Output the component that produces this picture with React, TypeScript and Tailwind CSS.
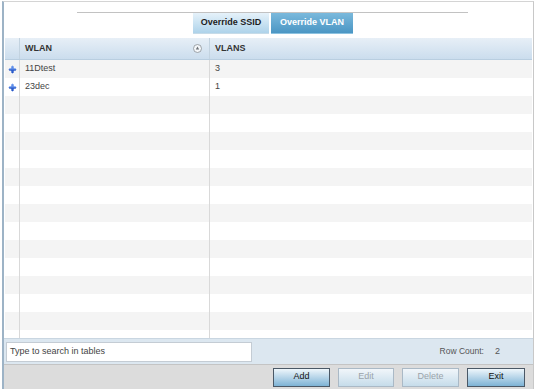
import React from "react";

function PlusIcon() {
  return (
    <svg width="9" height="9" viewBox="0 0 9 9">
      <defs>
        <linearGradient id="pg" x1="0" y1="0" x2="0" y2="1">
          <stop offset="0" stopColor="#6f9cf0" />
          <stop offset="1" stopColor="#1d4fc4" />
        </linearGradient>
      </defs>
      <path d="M4.5 0 L5.6 3.4 L9 4.5 L5.6 5.6 L4.5 9 L3.4 5.6 L0 4.5 L3.4 3.4 Z" fill="url(#pg)" />
      <rect x="3.4" y="1" width="2.2" height="7" fill="url(#pg)" />
      <rect x="1" y="3.4" width="7" height="2.2" fill="url(#pg)" />
    </svg>
  );
}

function SortIcon() {
  return (
    <svg width="9" height="9" viewBox="0 0 9 9">
      <circle cx="4.5" cy="4.5" r="4" fill="#f4f7fa" stroke="#8a8f95" strokeWidth="0.8" />
      <path d="M4.5 2.6 L6.2 5.6 L2.8 5.6 Z" fill="#6b7076" />
    </svg>
  );
}

const rows = [
  { wlan: "11Dtest", vlan: "3" },
  { wlan: "23dec", vlan: "1" },
];

export default function App() {
  const bodyRows = Array.from({ length: 16 }, (_, i) => rows[i] ?? null);
  return (
    <div
      className="w-[537px] h-[390px] bg-white overflow-hidden pt-[1px] pl-[2px]"
      style={{ fontFamily: '"Liberation Sans", Arial, sans-serif' }}
    >
      <div className="w-[532px] h-[388px] flex flex-col border-l-2 border-l-[#9db3c6] border-t border-t-[#d4d4d4] border-r border-r-[#c8c8c8] bg-white">
        {/* top tabs area */}
        <div className="h-[36px] relative flex pl-[189px] pt-[11px] shrink-0">
          <div className="absolute left-[73px] right-[65px] top-[10px] h-px bg-[#c2c2c2]" />
          <div className="flex h-[21px] relative">
            <div className="w-[76px] flex items-center justify-center text-[9px] font-bold text-[#1d1d1d] bg-gradient-to-b from-[#e6f2fa] to-[#aed3ea] border-b border-[#c6dbe8]">
              Override SSID
            </div>
            <div className="w-[2px]" />
            <div className="w-[82px] flex items-center justify-center text-[9px] font-bold text-white bg-gradient-to-b from-[#7ab9dc] to-[#4a96c4] border-b border-[#8cc2e0]">
              Override VLAN
            </div>
          </div>
        </div>

        {/* table */}
        <div className="ml-[1px] mr-[1px] flex flex-col shrink-0">
          <div className="flex h-[22px] bg-gradient-to-b from-[#e7eff7] to-[#cbdded] border-b border-[#b9cee0] text-[9px] font-bold text-[#333]">
            <div className="w-[15px] border-r border-[#c3d3e0]" />
            <div className="w-[190px] flex items-center justify-between pl-[5px] pr-[7px] border-r border-[#c3d3e0]">
              <span>WLAN</span>
              <SortIcon />
            </div>
            <div className="flex-1 flex items-center pl-[5px]">VLANS</div>
          </div>
          <div className="h-[278px] overflow-hidden flex flex-col">
            {bodyRows.map((r, i) => (
              <div
                key={i}
                className={`flex h-[18px] shrink-0 text-[9px] text-[#444] ${i % 2 === 0 ? "bg-[#f4f4f4]" : "bg-white"}`}
              >
                <div className="w-[15px] flex items-center justify-center border-r border-[#d9d9d9]">
                  {r ? <PlusIcon /> : null}
                </div>
                <div className="w-[190px] flex items-center pl-[5px] border-r border-[#d9d9d9]">
                  {r ? r.wlan : ""}
                </div>
                <div className="flex-1 flex items-center pl-[5px]">{r ? r.vlan : ""}</div>
              </div>
            ))}
          </div>
        </div>

        {/* search panel */}
        <div className="h-[26px] bg-[#dce7f0] flex items-center pl-[2px] pr-[33px] shrink-0 border-t border-[#c9d6e1]">
          <div className="w-[246px] h-[20px] bg-white border border-[#c4ccd4] flex items-center pl-[3px] text-[9px] text-[#444]">
            Type to search in tables
          </div>
          <div className="flex-1" />
          <span className="text-[8.5px] text-[#555]">Row Count:</span>
          <span className="text-[9px] text-[#555] ml-[11px]">2</span>
        </div>

        {/* button bar */}
        <div className="flex-1 bg-[#dcdcdc] border-t border-[#c4c4c4] flex items-center justify-end pr-[8px] gap-[8px]">
          <button className="w-[57px] h-[19px] text-[9px] text-[#111] border border-[#4a5866] bg-gradient-to-b from-[#eef6fb] to-[#7db3d5]">
            Add
          </button>
          <button className="w-[56px] h-[19px] text-[9px] text-[#9aa3aa] border border-[#aab9c6] bg-gradient-to-b from-[#f1f6fa] to-[#c6dcea]">
            Edit
          </button>
          <button className="w-[57px] h-[19px] text-[9px] text-[#9aa3aa] border border-[#aab9c6] bg-gradient-to-b from-[#f1f6fa] to-[#c6dcea]">
            Delete
          </button>
          <button className="w-[58px] h-[19px] text-[9px] text-[#111] border border-[#4a5866] bg-gradient-to-b from-[#eef6fb] to-[#7db3d5]">
            Exit
          </button>
        </div>
      </div>
    </div>
  );
}
